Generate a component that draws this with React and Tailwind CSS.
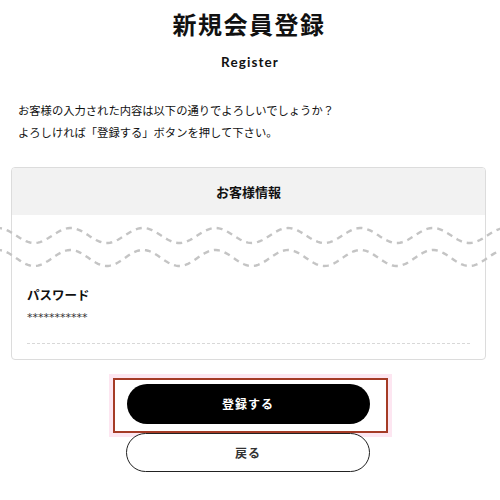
import React from 'react';

// torn-page marker: two dashed sine waves across the card
function wavePath(center, amp) {
  const pts = [];
  for (let x = -4; x <= 504; x += 2) {
    const y = center - amp * Math.cos((2 * Math.PI * (x - 70.5)) / 72.5);
    pts.push(`${x},${y.toFixed(2)}`);
  }
  return 'M' + pts.join(' L');
}

function TornMark() {
  return (
    <svg className="absolute left-0 top-[220px] pointer-events-none" width="500" height="52" viewBox="0 0 500 52">
      <path d={wavePath(15.5, 7.5)} fill="none" stroke="#c4c4c4" strokeWidth="2.4" strokeDasharray="6 5" />
      <path d={wavePath(38, 8)} fill="none" stroke="#c4c4c4" strokeWidth="2.4" strokeDasharray="6 5" />
    </svg>
  );
}

export default function App() {
  return (
    <div className="relative w-[500px] h-[500px] overflow-hidden bg-white text-[#111] font-['Noto_Sans_CJK_JP','Noto_Sans',sans-serif]">
      <h1 className="mt-[10px] text-center text-[24px] leading-[28px] font-bold tracking-[1.5px] pr-[2px]">新規会員登録</h1>
      <p className="mt-[16px] text-center text-[13.5px] leading-[16px] font-bold tracking-[0.08em] font-['Lato','Noto_Sans',sans-serif]">Register</p>

      <div className="mt-[29px] px-[18px] text-[11.3px] leading-[22px]">
        <p>お客様の入力された内容は以下の通りでよろしいでしょうか？</p>
        <p>よろしければ「登録する」ボタンを押して下さい。</p>
      </div>

      <div className="mt-[24px] ml-[11px] w-[475px] border border-[#dcdcdc] rounded-[4px] overflow-hidden">
        <div className="h-[47px] bg-[#f2f2f2] flex items-center justify-center text-[13px] font-bold">お客様情報</div>
        <div className="pt-[71px] px-[15px] pb-[15px]">
          <p className="text-[12.5px] leading-[18px] font-bold">パスワード</p>
          <p className="mt-[7px] text-[11px] leading-[14px] text-[#333] font-['DejaVu_Sans',sans-serif]">***********</p>
          <div className="mt-[18px] border-t border-dashed border-[#d8d8d8]"></div>
        </div>
      </div>

      <div className="mt-[18px] flex flex-col items-center">
        <div className="w-[275px] h-[55px] border-2 border-[#a53b26] shadow-[0_0_0_4px_#fde6f1] flex pl-[12px] pt-[4px]">
          <button className="w-[243px] h-[40px] rounded-full bg-black text-white text-[12px] font-bold tracking-[1px]">登録する</button>
        </div>
        <button className="ml-[-4px] w-[244px] h-[39px] rounded-full border border-[#222] bg-white text-[12px] font-bold tracking-[1px] text-[#333]">戻る</button>
      </div>

      <TornMark />
    </div>
  );
}
